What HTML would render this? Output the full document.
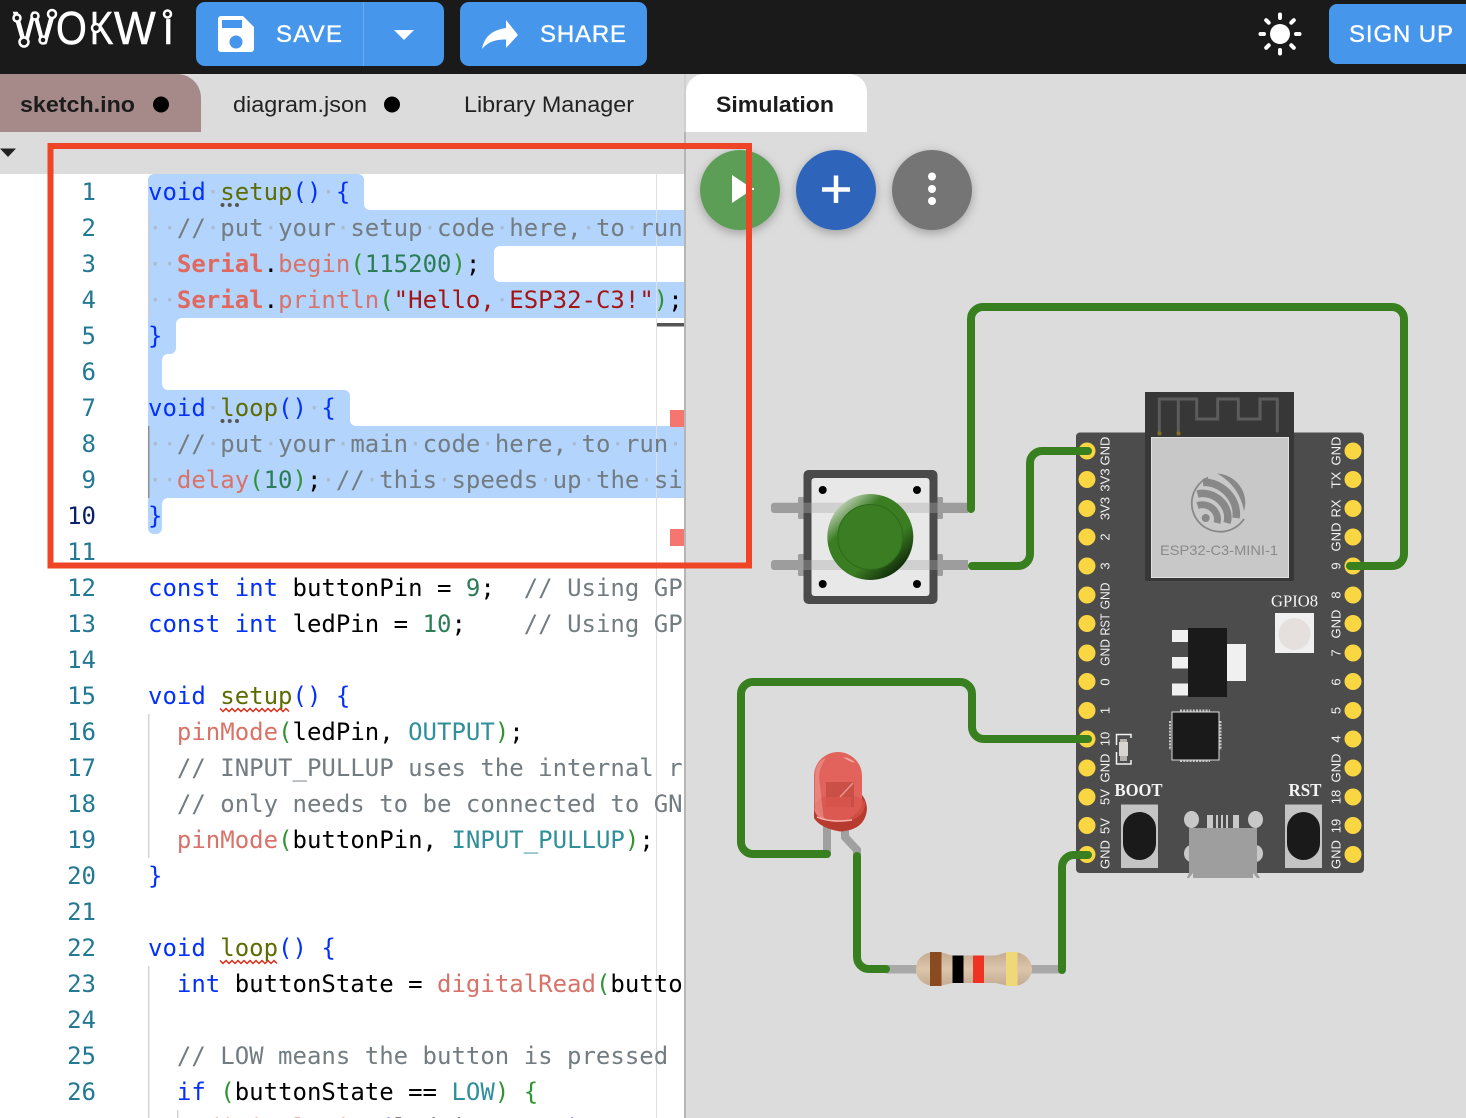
<!DOCTYPE html>
<html lang="en"><head><meta charset="utf-8"><title>Wokwi</title>
<style>
html,body{margin:0;padding:0;background:#dcdcdc}
#p{position:relative;width:1466px;height:1118px;overflow:hidden;background:#dcdcdc;font-family:"Liberation Sans",sans-serif}
svg{position:absolute;left:0;top:0}
#ed{position:absolute;left:0;top:174px;width:684px;height:944px;background:#fff;overflow:hidden}
#ed svg{left:0;top:-174px}
.l{position:absolute;left:148px;width:534px;overflow:hidden;height:36px;font:24px/36px "DejaVu Sans Mono","Liberation Mono",monospace;white-space:pre;color:#000}
.n{position:absolute;left:0;width:96px;text-align:right;font:24px/36px "DejaVu Sans Mono","Liberation Mono",monospace;color:#237893}
.k{color:#0431fa}.f{color:#5e6d03}.g{color:#319331}.c{color:#727c81}.s{color:#e0695f;font-weight:bold}.m{color:#d9736a}.u{color:#2b7d55}.q{color:#a31515}.t{color:#2f8f9a}.d{color:#a9bccf}
</style></head><body><div id="p">

<div id="ed">
<svg width="684" height="1118" viewBox="0 0 684 1118">
<path fill="#b3d4fc" d="M148 180a6 6 0 0 1 6-6H358a6 6 0 0 1 6 6V204a6 6 0 0 0 6 6H685V246H500a6 6 0 0 0-6 6V276a6 6 0 0 0 6 6H685V318H182a6 6 0 0 0-6 6V348a6 6 0 0 1-6 6H168a6 6 0 0 0-6 6V384a6 6 0 0 0 6 6H344a6 6 0 0 1 6 6V420a6 6 0 0 0 6 6H685V498H168a6 6 0 0 0-6 6V528a6 6 0 0 1-6 6H154a6 6 0 0 1-6-6Z"/>
<path stroke="#c9cfd3" stroke-width="1.5" d="M148.700 210V318"/>
<path stroke="#8d8d8d" stroke-width="1.5" d="M148.700 426V498"/>
<path stroke="#d3d3d3" stroke-width="1.5" d="M148.700 714V858M148.700 966V1118M177.700 1110V1118"/>
<path stroke="#e0e0e0" stroke-width="1" d="M656.500 174V1118"/>
<path fill="none" stroke="#dd2a14" stroke-width="1.500" d="M220 708.500l3 3 3-3 3 3 3-3 3 3 3-3 3 3 3-3 3 3 3-3 3 3 3-3 3 3 3-3 3 3 3-3 3 3 3-3 3 3 3-3 3 3 3-3 3 3M220 960.500l3 3 3-3 3 3 3-3 3 3 3-3 3 3 3-3 3 3 3-3 3 3 3-3 3 3 3-3 3 3 3-3 3 3 3-3 3 3"/>
<g fill="#555"><circle cx="222.500" cy="205" r="2"/><circle cx="229.700" cy="205" r="2"/><circle cx="237" cy="205" r="2"/><circle cx="222.500" cy="421" r="2"/><circle cx="229.700" cy="421" r="2"/><circle cx="237" cy="421" r="2"/></g>
<rect x="657" y="323" width="27" height="3.500" fill="#555"/>
<rect x="670" y="410" width="14" height="17" fill="#f4766e"/>
<rect x="670" y="529" width="14" height="17" fill="#f4766e"/>
</svg>

<div class="n" style="top:0">1</div><div class="n" style="top:36px">2</div><div class="n" style="top:72px">3</div><div class="n" style="top:108px">4</div><div class="n" style="top:144px">5</div><div class="n" style="top:180px">6</div><div class="n" style="top:216px">7</div><div class="n" style="top:252px">8</div><div class="n" style="top:288px">9</div><div class="n" style="top:324px;color:#0b216f">10</div><div class="n" style="top:360px">11</div><div class="n" style="top:396px">12</div><div class="n" style="top:432px">13</div><div class="n" style="top:468px">14</div><div class="n" style="top:504px">15</div><div class="n" style="top:540px">16</div><div class="n" style="top:576px">17</div><div class="n" style="top:612px">18</div><div class="n" style="top:648px">19</div><div class="n" style="top:684px">20</div><div class="n" style="top:720px">21</div><div class="n" style="top:756px">22</div><div class="n" style="top:792px">23</div><div class="n" style="top:828px">24</div><div class="n" style="top:864px">25</div><div class="n" style="top:900px">26</div><div class="n" style="top:936px">27</div>

<div class="l" style="top:0"><span class="k">void</span><span class="d">·</span><span class="f">setup</span><span class="k">()</span><span class="d">·</span><span class="k">{</span></div>
<div class="l" style="top:36px"><span class="d">··</span><span class="c">//<span class="d">·</span>put<span class="d">·</span>your<span class="d">·</span>setup<span class="d">·</span>code<span class="d">·</span>here,<span class="d">·</span>to<span class="d">·</span>run<span class="d">·</span>once:</span></div>
<div class="l" style="top:72px"><span class="d">··</span><span class="s">Serial</span>.<span class="m">begin</span><span class="g">(</span><span class="u">115200</span><span class="g">)</span>;</div>
<div class="l" style="top:108px"><span class="d">··</span><span class="s">Serial</span>.<span class="m">println</span><span class="g">(</span><span class="q">"Hello,<span class="d">·</span>ESP32-C3!"</span><span class="g">)</span>;</div>
<div class="l" style="top:144px"><span class="k">}</span></div>
<div class="l" style="top:216px"><span class="k">void</span><span class="d">·</span><span class="f">loop</span><span class="k">()</span><span class="d">·</span><span class="k">{</span></div>
<div class="l" style="top:252px"><span class="d">··</span><span class="c">//<span class="d">·</span>put<span class="d">·</span>your<span class="d">·</span>main<span class="d">·</span>code<span class="d">·</span>here,<span class="d">·</span>to<span class="d">·</span>run<span class="d">·</span>repeatedly:</span></div>
<div class="l" style="top:288px"><span class="d">··</span><span class="m">delay</span><span class="g">(</span><span class="u">10</span><span class="g">)</span>;<span class="d">·</span><span class="c">//<span class="d">·</span>this<span class="d">·</span>speeds<span class="d">·</span>up<span class="d">·</span>the<span class="d">·</span>simulation</span></div>
<div class="l" style="top:324px"><span class="k">}</span></div>
<div class="l" style="top:396px"><span class="k">const</span> <span class="k">int</span> buttonPin = <span class="u">9</span>;  <span class="c">// Using GPIO9</span></div>
<div class="l" style="top:432px"><span class="k">const</span> <span class="k">int</span> ledPin = <span class="u">10</span>;    <span class="c">// Using GPIO10</span></div>
<div class="l" style="top:504px"><span class="k">void</span> <span class="f">setup</span><span class="k">()</span> <span class="k">{</span></div>
<div class="l" style="top:540px">  <span class="m">pinMode</span><span class="g">(</span>ledPin, <span class="t">OUTPUT</span><span class="g">)</span>;</div>
<div class="l" style="top:576px">  <span class="c">// INPUT_PULLUP uses the internal resistor</span></div>
<div class="l" style="top:612px">  <span class="c">// only needs to be connected to GND</span></div>
<div class="l" style="top:648px">  <span class="m">pinMode</span><span class="g">(</span>buttonPin, <span class="t">INPUT_PULLUP</span><span class="g">)</span>;</div>
<div class="l" style="top:684px"><span class="k">}</span></div>
<div class="l" style="top:756px"><span class="k">void</span> <span class="f">loop</span><span class="k">()</span> <span class="k">{</span></div>
<div class="l" style="top:792px">  <span class="k">int</span> buttonState = <span class="m">digitalRead</span><span class="g">(</span>buttonPin<span class="g">)</span>;</div>
<div class="l" style="top:864px">  <span class="c">// LOW means the button is pressed</span></div>
<div class="l" style="top:900px">  <span class="k">if</span> <span class="g">(</span>buttonState == <span class="t">LOW</span><span class="g">)</span> <span class="g">{</span></div>
<div class="l" style="top:936px">    <span class="m">digitalWrite</span><span class="k">(</span>ledPin, <span class="t">HIGH</span><span class="k">)</span>;</div>
</div>

<svg width="1466" height="1118" viewBox="0 0 1466 1118" font-family="'Liberation Sans',sans-serif">
<defs>
<linearGradient id="btn" x1="0.15" y1="0.1" x2="0.85" y2="0.9"><stop offset="0" stop-color="#c4d3bc"/><stop offset="0.26" stop-color="#3a7d22"/><stop offset="0.68" stop-color="#3a7d22"/><stop offset="1" stop-color="#0f2608"/></linearGradient>
<linearGradient id="res" x1="0" y1="0" x2="0" y2="1"><stop offset="0" stop-color="#c4ab92"/><stop offset="0.5" stop-color="#dcc5ab"/><stop offset="1" stop-color="#c4ab92"/></linearGradient>
<filter id="sh" x="-30%" y="-30%" width="160%" height="170%"><feDropShadow dx="0" dy="3" stdDeviation="5" flood-color="#000" flood-opacity=".28"/></filter>
</defs>

<!-- header -->
<rect width="1466" height="74" fill="#1a1a1a"/>
<g font-size="46" fill="#fff" stroke="#fff" stroke-width=".6">
<text transform="translate(13 44) scale(.98 1)">W</text>
<text transform="translate(56 44) scale(.86 1)">O</text>
<text transform="translate(90 44) scale(.76 1)">K</text>
<text transform="translate(114 44) scale(.96 1)">W</text>
<text transform="translate(162.500 44) scale(.9 1)">ı</text>
</g>
<g fill="#1a1a1a" stroke="#fff" stroke-width="2.500"><circle cx="17" cy="18" r="3.500"/><circle cx="35" cy="16" r="3.500"/><circle cx="52" cy="14" r="4"/><circle cx="24" cy="42" r="4.500"/><circle cx="43" cy="40" r="3.500"/><circle cx="96" cy="28" r="4"/><circle cx="167.500" cy="14" r="3.500"/></g>
<rect x="196" y="2" width="248" height="64" rx="9" fill="#4696ec"/>
<rect x="363" y="2" width="1" height="64" fill="#6aaaf0"/>
<path fill="#fff" d="M221 16H243L254 27V49a3 3 0 0 1-3 3H221a3 3 0 0 1-3-3V19a3 3 0 0 1 3-3Z"/>
<rect x="222" y="20" width="20" height="8" fill="#4696ec"/><circle cx="236" cy="42" r="6.500" fill="#4696ec"/>
<path fill="#fff" d="M394 30H414L404 40Z"/>
<rect x="460" y="2" width="187" height="64" rx="9" fill="#4696ec"/>
<path fill="#fff" d="M506 20L518 35 506 48V39.500C495 39.500 488 42 482 49 484 38 491 30 506 28Z"/>
<circle cx="1280" cy="34" r="10" fill="#fff"/>
<g stroke="#fff" stroke-width="4" stroke-linecap="round"><path d="M1280 14.500V18M1280 50V53.500M1260.500 34H1264M1296 34H1299.500M1266.200 20.200L1268.700 22.700M1291.300 45.300L1293.800 47.800M1266.200 47.800L1268.700 45.300M1291.300 22.700L1293.800 20.200"/></g>
<rect x="1329" y="4" width="150" height="60" rx="8" fill="#4696ec"/>
<g font-size="24" fill="#fff" stroke="#fff" stroke-width=".35">
<text x="276" y="42" textLength="66">SAVE</text>
<text x="540" y="42" textLength="86">SHARE</text>
<text x="1349" y="42" textLength="104">SIGN UP</text>
</g>

<!-- tabs -->
<path d="M0 74H177a24 24 0 0 1 24 24V132H0Z" fill="#a68a8a"/>
<text x="20" y="112" font-size="22" font-weight="bold" fill="#1c1c1c" textLength="115" lengthAdjust="spacingAndGlyphs">sketch.ino</text>
<circle cx="161" cy="104.500" r="8" fill="#000"/>
<text x="233" y="112" font-size="22" fill="#222" textLength="134" lengthAdjust="spacingAndGlyphs">diagram.json</text>
<circle cx="392" cy="104.500" r="8" fill="#000"/>
<text x="464" y="112" font-size="22" fill="#222" textLength="170" lengthAdjust="spacingAndGlyphs">Library Manager</text>
<path d="M0 148.500H16L8 157Z" fill="#222"/>
<rect x="684" y="74" width="2" height="1044" fill="#b5b5b5"/>
<rect x="684" y="74" width="2" height="58" fill="#d0d0d0"/>
<path d="M686 132V92a18 18 0 0 1 18-18H849a18 18 0 0 1 18 18V132Z" fill="#fff"/>
<text x="716" y="112" font-size="22" font-weight="bold" fill="#1c1c1c" textLength="118" lengthAdjust="spacingAndGlyphs">Simulation</text>

<!-- sim buttons -->
<circle cx="740" cy="190" r="40" fill="#5b9e55" filter="url(#sh)"/>
<path d="M732 175L753 189 732 203Z" fill="#fff"/><rect x="750" y="188" width="4" height="2" fill="#fff"/>
<circle cx="836" cy="190" r="40" fill="#2d65bb" filter="url(#sh)"/>
<path d="M822 189.500H850M836 175.500V203" stroke="#fff" stroke-width="4.500"/>
<circle cx="932" cy="190" r="40" fill="#757575" filter="url(#sh)"/>
<g fill="#fff"><circle cx="932" cy="176.500" r="4"/><circle cx="932" cy="189" r="4"/><circle cx="932" cy="201" r="4"/></g>

<!-- board -->
<rect x="1076" y="432.500" width="288" height="440.500" rx="4" fill="#4c4c4c"/>
<rect x="1145" y="392" width="149" height="189" fill="#373737"/>
<path d="M1159.300 433V399H1178.300V433M1178.300 399H1196.700V419H1217.700V399H1238.300V419H1260V399H1277.300V431" fill="none" stroke="#5c5c5c" stroke-width="3" stroke-linecap="round"/>
<circle cx="1159.500" cy="433.500" r="2" fill="#8a6f20"/><circle cx="1178.500" cy="433.500" r="2" fill="#8a6f20"/>
<rect x="1151.500" y="437.500" width="137" height="140" fill="#c8c8c8" stroke="#e0e0e0" stroke-width="1"/>
<g fill="none" stroke="#888">
<path d="M1208 477.500A28.500 28.500 0 1 0 1244 519" stroke-width="1.800"/>
<path d="M1203 482.500C1220 481 1239 498 1236 518" stroke-width="7.500"/>
<path d="M1197.500 494C1214 490 1232 506 1227 523" stroke-width="7.500"/>
<path d="M1197.500 505.500C1208 502 1220 511 1217 523" stroke-width="7"/>
</g>
<path d="M1217 473.500C1234 474 1250 491 1244 511C1241 494 1231 481 1217 473.500Z" fill="#888"/>
<circle cx="1205.700" cy="518" r="4" fill="#888"/>
<text x="1219" y="555" font-size="14" fill="#8a8a8a" text-anchor="middle" textLength="118" lengthAdjust="spacingAndGlyphs">ESP32-C3-MINI-1</text>

<g fill="#f9d642">
<circle cx="1087" cy="451" r="8.500"/><circle cx="1087" cy="479.500" r="8.500"/><circle cx="1087" cy="508.500" r="8.500"/><circle cx="1087" cy="537" r="8.500"/><circle cx="1087" cy="566" r="8.500"/><circle cx="1087" cy="595" r="8.500"/><circle cx="1087" cy="623.500" r="8.500"/><circle cx="1087" cy="653" r="8.500"/><circle cx="1087" cy="681.500" r="8.500"/><circle cx="1087" cy="710.500" r="8.500"/><circle cx="1087" cy="739" r="8.500"/><circle cx="1087" cy="768" r="8.500"/><circle cx="1087" cy="797" r="8.500"/><circle cx="1087" cy="825.500" r="8.500"/><circle cx="1087" cy="854.500" r="8.500"/>
<circle cx="1353" cy="451" r="8.500"/><circle cx="1353" cy="479.500" r="8.500"/><circle cx="1353" cy="508.500" r="8.500"/><circle cx="1353" cy="537" r="8.500"/><circle cx="1353" cy="566" r="8.500"/><circle cx="1353" cy="595" r="8.500"/><circle cx="1353" cy="623.500" r="8.500"/><circle cx="1353" cy="653" r="8.500"/><circle cx="1353" cy="681.500" r="8.500"/><circle cx="1353" cy="710.500" r="8.500"/><circle cx="1353" cy="739" r="8.500"/><circle cx="1353" cy="768" r="8.500"/><circle cx="1353" cy="797" r="8.500"/><circle cx="1353" cy="825.500" r="8.500"/><circle cx="1353" cy="854.500" r="8.500"/>
</g>
<g font-size="13" fill="#f2f2f2" text-anchor="middle">
<text transform="translate(1109.500 451) rotate(-90)">GND</text><text transform="translate(1109.500 480) rotate(-90)">3V3</text><text transform="translate(1109.500 508.500) rotate(-90)">3V3</text><text transform="translate(1109.500 537) rotate(-90)">2</text><text transform="translate(1109.500 566) rotate(-90)">3</text><text transform="translate(1109.500 596) rotate(-90) scale(.93 1)">GND</text><text transform="translate(1109.500 624.500) rotate(-90) scale(.85 1)">RST</text><text transform="translate(1109.500 652.500) rotate(-90) scale(.93 1)">GND</text><text transform="translate(1109.500 682) rotate(-90)">0</text><text transform="translate(1109.500 710.500) rotate(-90)">1</text><text transform="translate(1109.500 739) rotate(-90)">10</text><text transform="translate(1109.500 768) rotate(-90)">GND</text><text transform="translate(1109.500 797) rotate(-90)">5V</text><text transform="translate(1109.500 826) rotate(-90)">5V</text><text transform="translate(1109.500 854.500) rotate(-90)">GND</text>
<text transform="translate(1340.500 451) rotate(-90)">GND</text><text transform="translate(1340.500 480) rotate(-90)">TX</text><text transform="translate(1340.500 508.500) rotate(-90)">RX</text><text transform="translate(1340.500 537) rotate(-90)">GND</text><text transform="translate(1340.500 566) rotate(-90)">9</text><text transform="translate(1340.500 595) rotate(-90)">8</text><text transform="translate(1340.500 624) rotate(-90)">GND</text><text transform="translate(1340.500 653) rotate(-90)">7</text><text transform="translate(1340.500 682) rotate(-90)">6</text><text transform="translate(1340.500 710.500) rotate(-90)">5</text><text transform="translate(1340.500 739) rotate(-90)">4</text><text transform="translate(1340.500 768) rotate(-90)">GND</text><text transform="translate(1340.500 797) rotate(-90)">18</text><text transform="translate(1340.500 826) rotate(-90)">19</text><text transform="translate(1340.500 854.500) rotate(-90)">GND</text>
</g>

<text x="1271" y="606.500" font-family="'Liberation Serif',serif" font-size="17" fill="#f4f4f4" textLength="47" lengthAdjust="spacingAndGlyphs">GPIO8</text>
<rect x="1275" y="613" width="39" height="40" fill="#f0f0f0"/><circle cx="1294.500" cy="634" r="16" fill="#e5e0dd"/>

<rect x="1172" y="630" width="16" height="12" fill="#f0f0f0"/><rect x="1172" y="657" width="16" height="11.500" fill="#f0f0f0"/><rect x="1172" y="683.500" width="16" height="12" fill="#f0f0f0"/>
<rect x="1227" y="644" width="19" height="37" fill="#f0f0f0"/>
<rect x="1188" y="628" width="39" height="69" fill="#1a1a1a"/>

<path d="M1180 710.500H1210M1180 761H1210M1170 721V750M1220.500 721V750" stroke="#c9c9c9" stroke-width="2" stroke-dasharray="2 1.200" fill="none"/>
<rect x="1172" y="712" width="47" height="48" fill="#1a1a1a" stroke="#ddd" stroke-width="1"/>

<path d="M1131 738V734.500H1116.500V745M1116.500 752V764H1131V760" fill="none" stroke="#f2f2f2" stroke-width="1.500"/>
<rect x="1120" y="739" width="7" height="22" fill="#b4b0ac"/><rect x="1119" y="742" width="9" height="14" fill="#d8d4d0"/>

<text x="1114.500" y="796" font-family="'Liberation Serif',serif" font-weight="bold" font-size="18" fill="#f4f4f4" textLength="48" lengthAdjust="spacingAndGlyphs">BOOT</text>
<text x="1288.500" y="796" font-family="'Liberation Serif',serif" font-weight="bold" font-size="18" fill="#f4f4f4" textLength="33" lengthAdjust="spacingAndGlyphs">RST</text>
<rect x="1121" y="804.500" width="37" height="63.500" fill="#c4c4c4"/><rect x="1123" y="812" width="33" height="48" rx="16.500" fill="#1a1a1a"/>
<rect x="1285" y="804.500" width="37" height="63.500" fill="#c4c4c4"/><rect x="1287" y="812" width="33" height="48" rx="16.500" fill="#1a1a1a"/>

<g fill="#c8c8c8"><ellipse cx="1191.500" cy="819.500" rx="7.500" ry="8.500"/><ellipse cx="1255.500" cy="819.500" rx="7.500" ry="8.500"/><ellipse cx="1191.500" cy="853.500" rx="7.500" ry="8.500"/><ellipse cx="1255.500" cy="853.500" rx="7.500" ry="8.500"/>
<rect x="1207" y="815" width="6" height="14"/><rect x="1216" y="815" width="2" height="14"/><rect x="1221" y="815" width="2" height="14"/><rect x="1226" y="815" width="2" height="14"/><rect x="1233" y="815" width="6" height="14"/></g>
<path d="M1189 828H1257V873L1260 878H1257L1253 873V878H1193V873L1189 878H1187L1189 873Z" fill="#9e9e9e"/>

<!-- pushbutton -->
<path d="M774 502.700H968V513H774a3 3 0 0 1-3-3V505.700a3 3 0 0 1 3-3ZM774 560H968V570H774a3 3 0 0 1-3-3V563a3 3 0 0 1 3-3Z" fill="#9d9d9d"/>
<rect x="798" y="497" width="6" height="22" rx="1.500" fill="#9d9d9d"/><rect x="798" y="554" width="6" height="22" rx="1.500" fill="#9d9d9d"/>
<rect x="937" y="497" width="6" height="22" rx="1.500" fill="#9d9d9d"/><rect x="937" y="554" width="6" height="22" rx="1.500" fill="#9d9d9d"/>
<rect x="803.500" y="470" width="134" height="134" rx="5" fill="#4a4a4a"/>
<rect x="811.500" y="478" width="118" height="118" rx="3" fill="#e8e8e8"/>
<rect x="803.500" y="502.700" width="8" height="10.300" fill="#6e6e6e"/><rect x="803.500" y="560" width="8" height="10" fill="#6e6e6e"/>
<rect x="929.500" y="502.700" width="8" height="10.300" fill="#6e6e6e"/><rect x="929.500" y="560" width="8" height="10" fill="#6e6e6e"/>
<rect x="811.500" y="502.700" width="118" height="10.300" fill="#d0d0d0"/><rect x="811.500" y="560" width="118" height="10" fill="#d0d0d0"/>
<g fill="#000"><circle cx="822.700" cy="490" r="4"/><circle cx="917" cy="490" r="4"/><circle cx="822.700" cy="584" r="4"/><circle cx="917" cy="584" r="4"/></g>
<circle cx="870.300" cy="537" r="43" fill="url(#btn)"/>
<circle cx="870.300" cy="537" r="32.500" fill="#3a7d22" stroke="#2e6a1b" stroke-width="1"/>

<!-- LED -->
<path d="M827 826V855M845 826V837L857 850V856" fill="none" stroke="#a0a0a0" stroke-width="8"/>
<path d="M814 810V818Q820 828 840 831.500Q866 830 867 808Q866 798 860 793Z" fill="#b83b2f"/>
<path d="M814 776A24 24 0 0 1 862 776V806Q852 822 836 822Q818 820 814 810Z" fill="#e2635c"/>
<path d="M814 806Q818 795 838 794Q858 794 865 802Q866 820 840 822Q820 820 814 806Z" fill="#d9564c" opacity=".7"/>
<path d="M826 782H854V807H851V797H826Z" fill="#c54c43" opacity=".85"/>
<path d="M826 797H851V807H826Z" fill="#d25249" opacity=".6"/>
<path d="M840 797L853 783" stroke="#e8938d" stroke-width="1.500"/>
<path d="M815 790V776Q815 762 826 758Q819 768 819 778L824 820Q817 818 815 812Z" fill="#fff" opacity=".22"/>
<path d="M843 757Q851 758 855 763Q848 761 843 757Z" fill="#fff" opacity=".45"/>
<path d="M817 817Q830 823 852 820" fill="none" stroke="#f4b8b2" stroke-width="1.500"/>

<!-- resistor -->
<rect x="886" y="965" width="178" height="8.500" fill="#a9a9a9"/>
<path fill="url(#res)" d="M916 969C916 958 925 952 935 952 945 952 948 955.500 955 955.500H993C1000 955.500 1003 952 1013 952 1024 952 1032 960 1032 969 1032 978 1024 986 1013 986 1003 986 1000 983 993 983H955C948 983 945 986 935 986 925 986 916 980 916 969Z"/>
<rect x="930" y="952" width="11.500" height="34" fill="#8a4b20"/>
<rect x="952.500" y="955.500" width="11" height="27.500" fill="#000"/>
<rect x="973" y="955.500" width="11" height="27.500" fill="#ee3324"/>
<rect x="1006" y="952" width="11.500" height="34" fill="#efd877"/>

<!-- wires -->
<g fill="none" stroke="#38801f" stroke-width="8" stroke-linecap="round" stroke-linejoin="round">
<path d="M971 509V319a12 12 0 0 1 12-12H1392a12 12 0 0 1 12 12V554a12 12 0 0 1-12 12H1350"/>
<path d="M972 566H1018a12 12 0 0 0 12-12V463a12 12 0 0 1 12-12H1088"/>
<path d="M1088 739H984a12 12 0 0 1-12-12V694a12 12 0 0 0-12-12H753a12 12 0 0 0-12 12V842a12 12 0 0 0 12 12H827"/>
<path d="M857 856V957a12 12 0 0 0 12 12H886"/>
<path d="M1062 970V867a12 12 0 0 1 12-12H1088"/>
</g>

<!-- annotation -->
<rect x="50.500" y="146" width="698.500" height="419.500" fill="none" stroke="#ef4526" stroke-width="6"/>
</svg>
</div></body></html>
